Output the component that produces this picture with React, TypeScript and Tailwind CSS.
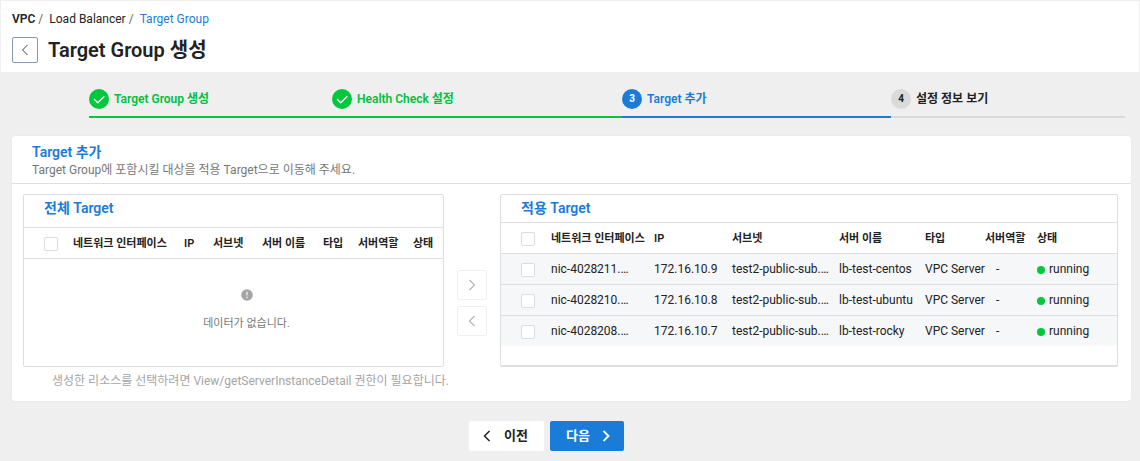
import type { ReactNode } from "react";

type Direction = "left" | "right";

function Chevron({ direction, className }: { direction: Direction; className: string }) {
  return (
    <svg viewBox="0 0 12 12" fill="none" stroke="currentColor" className={className} aria-hidden="true">
      <path d={direction === "left" ? "M8.5 1 3.5 6l5 5" : "M3.5 1l5 5-5 5"} />
    </svg>
  );
}

const steps = [
  { label: "Target Group 생성", state: "done" },
  { label: "Health Check 설정", state: "done" },
  { label: "Target 추가", state: "current" },
  { label: "설정 정보 보기", state: "next" },
] as const;

const stepStyles = {
  done: { item: "border-[#00c73c] text-[#00c040]", dot: "bg-[#00c73c] text-white" },
  current: { item: "border-[#1a7cd8] text-[#1a7cd8]", dot: "bg-[#1a7cd8] text-white" },
  next: { item: "border-[#dadada] text-[#222]", dot: "bg-[#dadada] text-[#222]" },
};

function Stepper() {
  return (
    <ol className="ml-[89px] mr-[15px] grid grid-cols-[243fr_290fr_269fr_234fr] pt-[17px]">
      {steps.map((step, index) => (
        <li
          key={step.label}
          className={`flex items-center gap-[5px] border-b-2 pb-[7px] font-semibold ${stepStyles[step.state].item}`}
        >
          <span
            className={`flex size-5 items-center justify-center rounded-full text-[10px] font-bold ${stepStyles[step.state].dot}`}
          >
            {step.state === "done" ? (
              <svg viewBox="0 0 20 20" fill="none" stroke="currentColor" strokeWidth="1.3" className="size-5" aria-hidden="true">
                <path d="M5 10l3.8 3.8L15.300 7.300" />
              </svg>
            ) : (
              index + 1
            )}
          </span>
          {step.label}
        </li>
      ))}
    </ol>
  );
}

function CheckBox({ label }: { label: string }) {
  return (
    <input
      type="checkbox"
      aria-label={label}
      className="mt-[2px] block size-[14px] appearance-none rounded-[2px] border border-[#dcdcdc] bg-white checked:border-[#1a7cd8] checked:bg-[#1a7cd8]"
    />
  );
}

const headings = ["네트워크 인터페이스", "IP", "서브넷", "서버 이름", "타입", "서버역할", "상태"];

function HeaderRow({ label }: { label: string }) {
  return (
    <thead>
      <tr className="h-[30px] border-b border-[#dedede] text-left text-[11px]">
        <th className="pl-5">
          <CheckBox label={label} />
        </th>
        {headings.map((heading) => (
          <th key={heading} className="pt-[3px] font-semibold whitespace-nowrap">
            {heading}
          </th>
        ))}
      </tr>
    </thead>
  );
}

function PanelTitle({ children, className }: { children: ReactNode; className: string }) {
  return (
    <h3 className={`border-b border-[#dedede] pl-5 text-sm leading-[27px] font-semibold text-[#1a7cd8] ${className}`}>
      {children}
    </h3>
  );
}

const servers = [
  { nic: "nic-4028211.…", ip: "172.16.10.9", subnet: "test2-public-sub.…", name: "lb-test-centos" },
  { nic: "nic-4028210.…", ip: "172.16.10.8", subnet: "test2-public-sub.…", name: "lb-test-ubuntu" },
  { nic: "nic-4028208.…", ip: "172.16.10.7", subnet: "test2-public-sub.…", name: "lb-test-rocky" },
];

function AllTargets() {
  return (
    <section className="flex flex-1 flex-col rounded-[2px] border border-[#dedede]">
      <PanelTitle className="pb-[5px]">전체 Target</PanelTitle>
      <table className="w-full table-fixed">
        <colgroup>
          <col className="w-[49px]" />
          <col className="w-[111px]" />
          <col className="w-[29px]" />
          <col className="w-[49px]" />
          <col className="w-[61px]" />
          <col className="w-[35px]" />
          <col className="w-[55px]" />
          <col className="w-[30px]" />
        </colgroup>
        <HeaderRow label="전체 Target 모두 선택" />
      </table>
      <div className="flex flex-1 flex-col items-center gap-[15px] pt-[30px] pl-[26px] text-[11px] leading-4 text-[#777]">
        <svg viewBox="0 0 12 12" className="size-3" aria-hidden="true">
          <circle cx="6" cy="6" r="5.800" fill="#a5a5a5" />
          <path d="M6 2.800v3.600M6 7.800v1.400" stroke="#e6eaf2" strokeWidth="1.400" />
        </svg>
        <p>데이터가 없습니다.</p>
      </div>
    </section>
  );
}

function AppliedTargets() {
  return (
    <section className="rounded-[2px] border border-b-2 border-[#dedede] pb-[19px]">
      <PanelTitle className="">적용 Target</PanelTitle>
      <table className="w-full table-fixed">
        <colgroup>
          <col className="w-[50px]" />
          <col className="w-[103px]" />
          <col className="w-[78px]" />
          <col className="w-[107px]" />
          <col className="w-[86px]" />
          <col className="w-[60px]" />
          <col className="w-[52px]" />
          <col className="w-[80px]" />
        </colgroup>
        <HeaderRow label="적용 Target 모두 선택" />
        <tbody className="bg-[#f5f7f9] whitespace-nowrap">
          {servers.map((server) => (
            <tr key={server.nic} className="h-[31px] border-b border-[#dedede] last:border-b-0">
              <td className="pl-5">
                <CheckBox label={server.name} />
              </td>
              <td>{server.nic}</td>
              <td>{server.ip}</td>
              <td>{server.subnet}</td>
              <td>{server.name}</td>
              <td>VPC Server</td>
              <td className="pl-[11px]">-</td>
              <td>
                <span className="flex items-center gap-1">
                  <span className="mt-[2px] size-2 rounded-full bg-[#00c73c]" />
                  running
                </span>
              </td>
            </tr>
          ))}
        </tbody>
      </table>
    </section>
  );
}

function MoveButton({ direction, label }: { direction: Direction; label: string }) {
  return (
    <button
      type="button"
      aria-label={label}
      className="flex size-[30px] items-center justify-center rounded-[2px] border border-[#f0f0f0] text-[#b8b8b8]"
    >
      <Chevron direction={direction} className="size-3 stroke-[1.3]" />
    </button>
  );
}

export default function App() {
  return (
    <div className="min-h-screen bg-[#efefef] font-['Roboto','Noto_Sans_CJK_KR',sans-serif] text-xs text-[#222]">
      <header className="border border-b-0 border-[#efefef] bg-white px-[11px] pt-[10px] pb-[9px]">
        <nav aria-label="breadcrumb" className="flex">
          <a href="#vpc" className="font-semibold">VPC</a>
          <span className="mr-[6px] ml-[3px] text-[#666]">/</span>
          <a href="#load-balancer">Load Balancer</a>
          <span className="mr-[6px] ml-[3px] text-[#666]">/</span>
          <a href="#target-group" className="text-[#1a7cd8]">Target Group</a>
        </nav>
        <div className="mt-[10px] flex items-center gap-[10px]">
          <button
            type="button"
            aria-label="뒤로"
            className="flex size-[26px] items-center justify-center rounded-[2px] border border-[#8299b5] text-[#444]"
          >
            <Chevron direction="left" className="size-3" />
          </button>
          <h1 className="text-xl leading-[26px] font-semibold">Target Group 생성</h1>
        </div>
      </header>

      <Stepper />

      <main className="mt-[18px] mr-[9px] ml-3 rounded-[3px] bg-white shadow-[0_0_1px_#cfcfcf]">
        <div className="border-b border-[#dedede] pt-[6px] pb-1 pl-5">
          <h2 className="text-sm leading-5 font-semibold text-[#1a7cd8]">Target 추가</h2>
          <p className="leading-[17px] text-[#777]">Target Group에 포함시킬 대상을 적용 Target으로 이동해 주세요.</p>
        </div>
        <div className="grid grid-cols-[421fr_56px_618fr] pt-[10px] pr-[13px] pl-[11px]">
          <AllTargets />
          <div className="flex flex-col items-center justify-center gap-[6px] pt-[45px]">
            <MoveButton direction="right" label="적용 Target으로 이동" />
            <MoveButton direction="left" label="전체 Target으로 이동" />
          </div>
          <AppliedTargets />
        </div>
        <p className="pt-[6px] pb-3 pl-10 text-[#a5a5a5]">
          생성한 리소스를 선택하려면 View/getServerInstanceDetail 권한이 필요합니다.
        </p>
      </main>

      <footer className="mt-5 flex justify-center gap-[6px] pr-[47px] text-[13px] font-semibold">
        <button type="button" className="flex h-[30px] items-center gap-[11px] rounded-[2px] bg-white pr-4 pl-3">
          <Chevron direction="left" className="size-3 stroke-[1.5]" />
          이전
        </button>
        <button type="button" className="flex h-[30px] items-center gap-[10px] rounded-[2px] bg-[#1a7cd8] pr-3 pl-4 text-white">
          다음
          <Chevron direction="right" className="size-3 stroke-[1.8]" />
        </button>
      </footer>
    </div>
  );
}
